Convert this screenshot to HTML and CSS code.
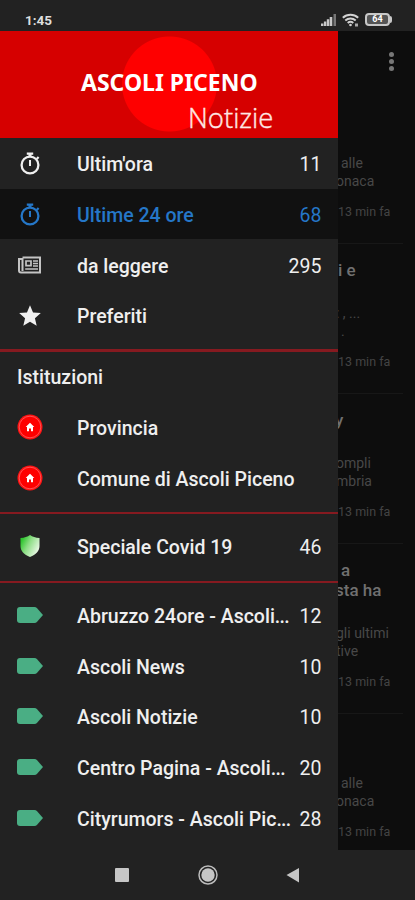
FILE: index.html
```
<!DOCTYPE html>
<html lang="it">
<head>
    <meta charset="UTF-8">
    <meta name="viewport" content="width=device-width, initial-scale=1.0">
    <title>Ascoli Piceno Notizie</title>
    <link rel="stylesheet" href="styles.css">
</head>
<body>
    <svg class="defs" width="0" height="0">
        <defs>
            <linearGradient id="shieldFill" x1="0" y1="0" x2="1" y2="0.6">
                <stop offset="0.15" stop-color="#2fc52f"/>
                <stop offset="0.5" stop-color="#8ede86"/>
                <stop offset="1" stop-color="#e8f8e4"/>
            </linearGradient>
        </defs>
        <symbol id="timer" viewBox="0 0 24 24">
            <circle cx="12" cy="14" r="8.400" fill="none" stroke="currentColor" stroke-width="2.300"/>
            <path fill="currentColor" d="M8.800 1.500h6.400v2.300h-1.700V6h-3V3.800H8.800zM11 9h2v6h-2zM18 7.200l1.800-1.900 1.600 1.500-1.900 1.900z"/>
        </symbol>
        <symbol id="house" viewBox="0 0 26 26">
            <circle cx="13" cy="13" r="12.5" fill="#fe1212"/>
            <circle cx="13" cy="13" r="10.8" fill="#fe0000" stroke="#ff6464" stroke-width="0.8"/>
            <path fill="#fff" d="M13 8.800 8.700 13H10v4.200h2v-2.700h2v2.700h2V13h1.300z"/>
        </symbol>
        <symbol id="tag" viewBox="0 0 26 16">
            <path fill="#4aae84" d="M3 0h14.5c1 0 1.700.4 2.400 1.100L26 8l-6.100 6.900c-.7.7-1.400 1.100-2.400 1.100H3c-2 0-3-1.200-3-3V3c0-1.800 1-3 3-3z"/>
        </symbol>
    </svg>

    <div class="phone">
        <header class="status-bar">
            <span class="clock">1:45</span>
            <div class="status-icons">
                <svg class="signal" width="16" height="12" viewBox="0 0 16 12">
                    <path fill="#c8c8c8" d="M0 9.500h2.400V12H0zM2.900 7.500h2.400V12H2.900zM5.800 5.300h2.400V12H5.800zM8.700 3h2.600v9H8.700z"/>
                    <path fill="#777" d="M12.500 0h2.500v12h-2.500z"/>
                </svg>
                <svg class="wifi" width="18" height="14" viewBox="0 0 18 14">
                    <g fill="none" stroke="#d2d2d2" stroke-width="2">
                        <path d="M.8 4.800a11.500 11.500 0 0 1 15.400 0"/>
                        <path d="M3.300 7.500a7.800 7.800 0 0 1 10.400 0"/>
                        <path d="M5.700 10a4.300 4.300 0 0 1 5.600 0"/>
                    </g>
                    <circle cx="8.500" cy="12" r="1.300" fill="#d2d2d2"/>
                    <path fill="#aaa" d="M13 10.500h3v3h-3z"/>
                </svg>
                <div class="battery">64</div>
            </div>
        </header>

        <main class="screen">
            <div class="feed">
                <div class="toolbar"><i></i><i></i><i></i></div>
                <article>
                    <p class="in">alle</p>
                    <p class="cut">onaca</p>
                    <time>13 min fa</time>
                </article>
                <article>
                    <h3>i e</h3>
                    <p class="cut">: , ...</p>
                    <p class="in">.</p>
                    <time>13 min fa</time>
                </article>
                <article>
                    <h3 class="cut">y</h3>
                    <p class="cut">ompli</p>
                    <p class="cut">mbria</p>
                    <time>13 min fa</time>
                </article>
                <article class="tall">
                    <h3 class="in">a</h3>
                    <h3 class="cut">sta ha</h3>
                    <p class="cut">gli ultimi</p>
                    <p class="cut">tive</p>
                    <time>13 min fa</time>
                </article>
                <article>
                    <p class="in">alle</p>
                    <p class="cut">onaca</p>
                    <time>13 min fa</time>
                </article>
            </div>

            <nav class="drawer">
                <div class="brand">
                    <div class="brand-name">ASCOLI PICENO</div>
                    <div class="brand-sub">Notizie</div>
                </div>

                <ul class="main-list">
                    <li>
                        <span class="icon"><svg width="24" height="24"><use href="#timer"/></svg></span>
                        <span class="label">Ultim'ora</span>
                        <span class="count">11</span>
                    </li>
                    <li class="active">
                        <span class="icon"><svg width="24" height="24"><use href="#timer"/></svg></span>
                        <span class="label">Ultime 24 ore</span>
                        <span class="count">68</span>
                    </li>
                    <li>
                        <span class="icon">
                            <svg width="24" height="18" viewBox="0 0 24 18">
                                <path fill="none" stroke="#c4c4c4" stroke-width="2" d="M4.500 1.500H22v15H3c-1.200 0-2-.7-2-2V3h3.500v12"/>
                                <path fill="none" stroke="#c4c4c4" stroke-width="1.700" d="M8 5h5v4.700H8zM15 5h5M15 7.500h5M15 10h5M7.200 13h12.800"/>
                            </svg>
                        </span>
                        <span class="label">da leggere</span>
                        <span class="count">295</span>
                    </li>
                    <li>
                        <span class="icon">
                            <svg width="26" height="26" viewBox="0 0 24 24">
                                <path fill="#f0f0f0" d="M12 18.270 18.180 22l-1.640-7.030L22 10.240l-7.190-.61L12 3 9.190 9.630 2 10.240l5.460 4.730L5.820 22z"/>
                            </svg>
                        </span>
                        <span class="label">Preferiti</span>
                    </li>
                </ul>

                <ul class="institutions">
                    <li class="heading">Istituzioni</li>
                    <li>
                        <span class="icon"><svg width="26" height="26"><use href="#house"/></svg></span>
                        <span class="label">Provincia</span>
                    </li>
                    <li>
                        <span class="icon"><svg width="26" height="26"><use href="#house"/></svg></span>
                        <span class="label">Comune di Ascoli Piceno</span>
                    </li>
                </ul>

                <ul class="special">
                    <li>
                        <span class="icon">
                            <svg width="20" height="22" viewBox="0 0 20 22">
                                <path fill="url(#shieldFill)" d="M10 0c2.500 1.800 5.500 2.700 9.500 3v8c0 5-3.500 8.700-9.500 11C4 19.700.5 16 .5 11V3C4.500 2.700 7.500 1.800 10 0z"/>
                            </svg>
                        </span>
                        <span class="label">Speciale Covid 19</span>
                        <span class="count">46</span>
                    </li>
                </ul>

                <ul class="sources">
                    <li>
                        <span class="icon"><svg width="26" height="16"><use href="#tag"/></svg></span>
                        <span class="label">Abruzzo 24ore - Ascoli<span class="dots">...</span></span>
                        <span class="count">12</span>
                    </li>
                    <li>
                        <span class="icon"><svg width="26" height="16"><use href="#tag"/></svg></span>
                        <span class="label">Ascoli News</span>
                        <span class="count">10</span>
                    </li>
                    <li>
                        <span class="icon"><svg width="26" height="16"><use href="#tag"/></svg></span>
                        <span class="label">Ascoli Notizie</span>
                        <span class="count">10</span>
                    </li>
                    <li>
                        <span class="icon"><svg width="26" height="16"><use href="#tag"/></svg></span>
                        <span class="label">Centro Pagina - Ascoli<span class="dots">...</span></span>
                        <span class="count">20</span>
                    </li>
                    <li>
                        <span class="icon"><svg width="26" height="16"><use href="#tag"/></svg></span>
                        <span class="label">Cityrumors - Ascoli Pic<span class="dots">...</span></span>
                        <span class="count">28</span>
                    </li>
                </ul>
            </nav>
        </main>

        <footer class="nav-bar">
            <svg width="22" height="22" viewBox="0 0 22 22">
                <rect x="4" y="4" width="14" height="14" rx="1" fill="#c6c6c6"/>
            </svg>
            <svg width="22" height="22" viewBox="0 0 22 22">
                <circle cx="11" cy="11" r="9" fill="none" stroke="#bcbcbc" stroke-width="1.500"/>
                <circle cx="11" cy="11" r="6.700" fill="#c6c6c6"/>
            </svg>
            <svg width="22" height="22" viewBox="0 0 22 22">
                <path fill="#c6c6c6" d="M3.500 11 16 4v14.500z"/>
            </svg>
        </footer>
    </div>
</body>
</html>
```
FILE: styles.css
```
* {
    box-sizing: border-box;
}
body {
    margin: 0;
    background-color: #222;
    color: #efefef;
    font-family: Roboto, "Liberation Sans", sans-serif;
}
.defs {
    position: absolute;
}
.phone {
    display: flex;
    flex-direction: column;
    width: 415px;
    height: 900px;
    overflow: hidden;
}
.status-bar {
    display: flex;
    justify-content: space-between;
    align-items: center;
    height: 31px;
    padding: 8px 22px 0 25px;
    background-color: #222;
}
.clock {
    font-size: 13.5px;
    font-weight: 700;
    color: #dedede;
}
.status-icons {
    display: flex;
    align-items: center;
    gap: 5px;
}
.battery {
    position: relative;
    width: 25px;
    height: 13px;
    margin-right: 3px;
    border: 2px solid #c8c8c8;
    border-radius: 4px;
    background-color: #555;
    color: #fff;
    font-size: 9px;
    font-weight: 700;
    line-height: 9px;
    text-align: center;
}
.battery::after {
    content: "";
    position: absolute;
    top: 1px;
    right: -4px;
    width: 2px;
    height: 7px;
    border-radius: 0 2px 2px 0;
    background-color: #c8c8c8;
}
.screen {
    position: relative;
    height: 819px;
    overflow: hidden;
    background-color: #0d0d0d;
}

/* news list behind the drawer */
.feed {
    padding-left: 338px;
    white-space: nowrap;
}
.toolbar {
    display: flex;
    flex-direction: column;
    align-items: flex-end;
    gap: 2px;
    height: 63px;
    padding: 21px 21px 0 0;
}
.toolbar i {
    width: 5px;
    height: 5px;
    border-radius: 50%;
    background-color: #777;
}
article {
    display: flex;
    flex-direction: column;
    justify-content: flex-end;
    height: 150px;
    margin-right: 12px;
    padding-bottom: 22px;
    border-bottom: 1px solid #171717;
}
article.tall {
    height: 170px;
}
article h3 {
    margin: 0;
    color: #707070;
    font-size: 17px;
    font-weight: 500;
    line-height: 20px;
}
article h3 + p {
    margin-top: 24px;
}
article p {
    margin: 0;
    color: #484848;
    font-size: 14px;
    line-height: 18px;
}
article time {
    margin-top: 13px;
    color: #444;
    font-size: 12.5px;
    line-height: 18px;
}
article .in {
    padding-left: 3px;
}
article .cut {
    margin-left: -2px;
}
article h3.cut {
    margin-left: -3px;
}

.drawer {
    position: absolute;
    top: 0;
    left: 0;
    width: 338px;
    height: 100%;
    overflow: hidden;
    background-color: #222;
}
.brand {
    height: 107px;
    padding-top: 36px;
    background: radial-gradient(circle 48px at 169.5px 53px, #fe0000 47px, #d60000 48px);
    color: #fff;
    white-space: nowrap;
}
.brand-name {
    padding-left: 81px;
    font-family: "Noto Sans", sans-serif;
    font-size: 23px;
    font-weight: 700;
    line-height: 30px;
}
.brand-sub {
    margin-top: 2px;
    padding-left: 188px;
    color: #ffe8e4;
    font-family: "Open Sans", sans-serif;
    font-size: 27.5px;
    font-weight: 300;
    line-height: 38px;
    -webkit-text-stroke: 0.4px #ffe8e4;
}
.drawer ul {
    margin: 0;
    padding: 0;
    list-style: none;
}
.drawer li {
    display: flex;
    align-items: center;
    height: 50.7px;
    padding: 0 16.5px 0 17px;
    font-size: 19.5px;
    font-weight: 500;
    white-space: nowrap;
}
.drawer li.active {
    background-color: #111;
    color: #2577c8;
}
.icon {
    display: flex;
    justify-content: center;
    width: 26px;
    margin-right: 34px;
}
.label {
    flex: 1;
    padding-top: 3px;
}
.dots {
    letter-spacing: -0.7px;
}
.count {
    padding-top: 3px;
    font-weight: 400;
}
.main-list {
    height: 211px;
}
.institutions {
    height: 163px;
    border-top: 3px solid #861a20;
}
.drawer .heading {
    height: 49.5px;
    padding-top: 2px;
}
.special {
    height: 68.5px;
    border-top: 2px solid #861a20;
}
.sources {
    border-top: 2px solid #861a20;
}
.special li:first-child,
.sources li:first-child {
    margin-top: 7px;
}
.nav-bar {
    display: flex;
    justify-content: center;
    align-items: center;
    gap: 64px;
    height: 50px;
    background-color: #222;
}
```
